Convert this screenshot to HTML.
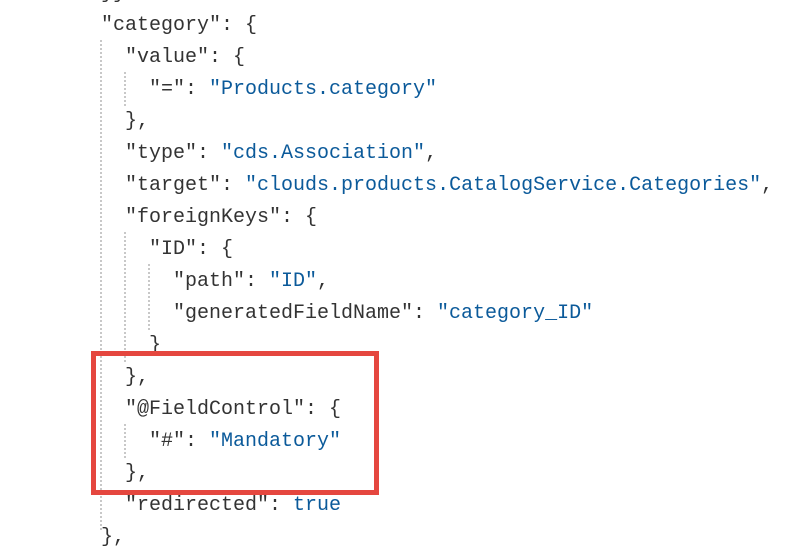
<!DOCTYPE html>
<html><head><style>
body{margin:0;width:789px;height:557px;background:#fff;overflow:hidden;position:relative;font-family:"Liberation Mono",monospace;font-size:20px;color:#333}
.l{position:absolute;white-space:pre;line-height:32px;height:32px;margin-top:2px}
.s{color:#0b5a9a}
.g{position:absolute;width:0;border-left:2px dotted #c8c8c8}
.box{position:absolute;left:91px;top:351px;width:278px;height:134px;border:5px solid #e5473f}
</style></head><body>
<div class="g" style="left:100px;top:40px;height:490px"></div>
<div class="g" style="left:124px;top:72px;height:34px"></div>
<div class="g" style="left:124px;top:232px;height:130px"></div>
<div class="g" style="left:148px;top:264px;height:66px"></div>
<div class="g" style="left:124px;top:424px;height:34px"></div>
<div class="l" style="left:101px;top:-24px">}}</div>
<div class="l" style="left:101px;top:8px">"category": {</div>
<div class="l" style="left:125px;top:40px">"value": {</div>
<div class="l" style="left:149px;top:72px">"=": <span class="s">"Products.category"</span></div>
<div class="l" style="left:125px;top:104px">},</div>
<div class="l" style="left:125px;top:136px">"type": <span class="s">"cds.Association"</span>,</div>
<div class="l" style="left:125px;top:168px">"target": <span class="s">"clouds.products.CatalogService.Categories"</span>,</div>
<div class="l" style="left:125px;top:200px">"foreignKeys": {</div>
<div class="l" style="left:149px;top:232px">"ID": {</div>
<div class="l" style="left:173px;top:264px">"path": <span class="s">"ID"</span>,</div>
<div class="l" style="left:173px;top:296px">"generatedFieldName": <span class="s">"category_ID"</span></div>
<div class="l" style="left:149px;top:328px">}</div>
<div class="l" style="left:125px;top:360px">},</div>
<div class="l" style="left:125px;top:392px">"@FieldControl": {</div>
<div class="l" style="left:149px;top:424px">"#": <span class="s">"Mandatory"</span></div>
<div class="l" style="left:125px;top:456px">},</div>
<div class="l" style="left:125px;top:488px">"redirected": <span class="s">true</span></div>
<div class="l" style="left:101px;top:520px">},</div>
<div class="box"></div>
</body></html>
